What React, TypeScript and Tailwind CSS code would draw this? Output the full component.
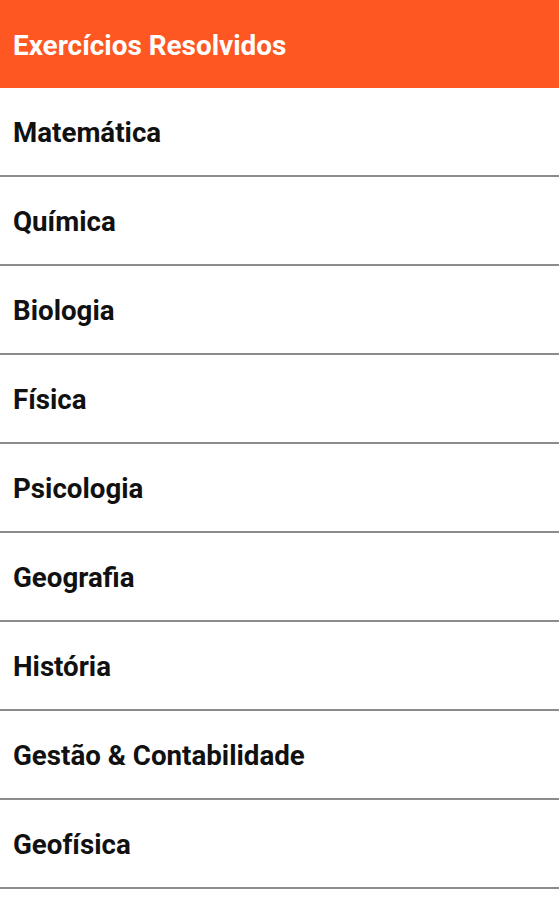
const subjects = [
  'Matemática',
  'Química',
  'Biologia',
  'Física',
  'Psicologia',
  'Geografia',
  'História',
  'Gestão & Contabilidade',
  'Geofísica',
];

export default function App() {
  return (
    <div className="w-[559px] h-[900px] bg-white overflow-hidden font-['Roboto',sans-serif]">
      <header className="h-[88px] bg-[#ff5722] flex items-center px-[13px] pt-[3px]">
        <h1 className="text-white text-[27.9px] font-bold">Exercícios Resolvidos</h1>
      </header>
      <ul>
        {subjects.map((s) => (
          <li key={s} className="h-[89px] flex items-center px-[13px] pt-[3px] border-b-2 border-[#8c8c8c]">
            <span className="text-[27.7px] font-bold text-[#111]">{s}</span>
          </li>
        ))}
      </ul>
    </div>
  );
}
